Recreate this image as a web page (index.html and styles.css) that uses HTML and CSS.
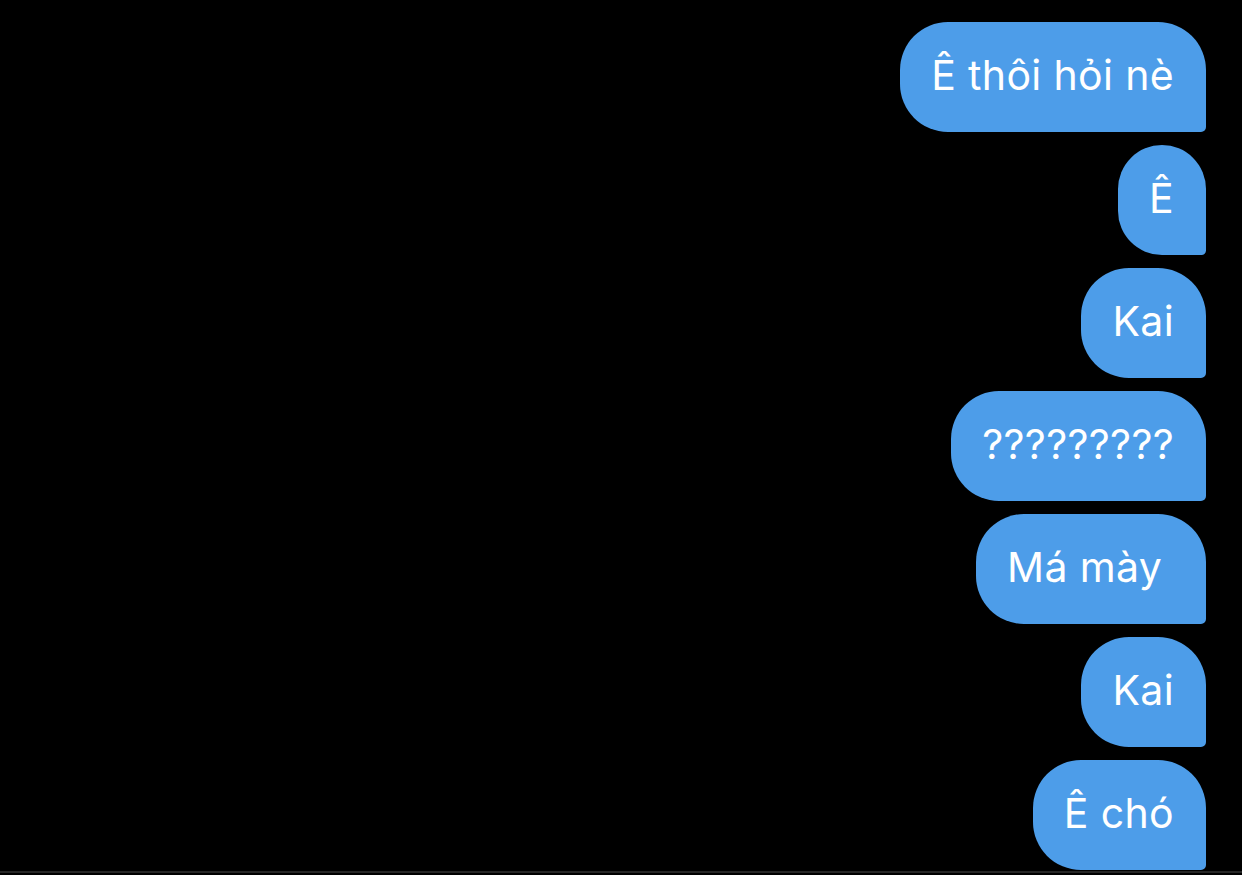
FILE: index.html
```html
<!DOCTYPE html>
<html lang="vi">
<head>
  <meta charset="UTF-8">
  <title>Tin nhắn</title>
  <link rel="stylesheet" href="styles.css">
</head>
<body>
<div class="chat">
  <div class="bubble">Ê thôi hỏi nè</div>
  <div class="bubble">Ê</div>
  <div class="bubble">Kai</div>
  <div class="bubble">?????????</div>
  <div class="bubble">Má mày </div>
  <div class="bubble">Kai</div>
  <div class="bubble">Ê chó</div>
</div>
</body>
</html>
```

FILE: styles.css
```css
* {
  margin: 0;
  padding: 0;
  box-sizing: border-box;
}

:root {
  --color-bg: #000;
  --color-bubble: #4d9de9;
  --color-line: #262626;
}

body {
  background-color: var(--color-bg);
  font-family: Inter, "Noto Sans", sans-serif;
  height: 875px;
  overflow: hidden;
}

.chat {
  height: 873px;
  display: flex;
  flex-direction: column;
  align-items: flex-end;
  gap: 13px;
  padding: 22px 36px 0;
  border-bottom: 2px solid var(--color-line);
}

.bubble {
  height: 110px;
  display: flex;
  align-items: center;
  padding: 0 32px 4px 31px;
  background-color: var(--color-bubble);
  color: #fff;
  font-size: 41px;
  letter-spacing: 0.35px;
  white-space: pre;
  border-radius: 48px 48px 5px 48px;
}
```
